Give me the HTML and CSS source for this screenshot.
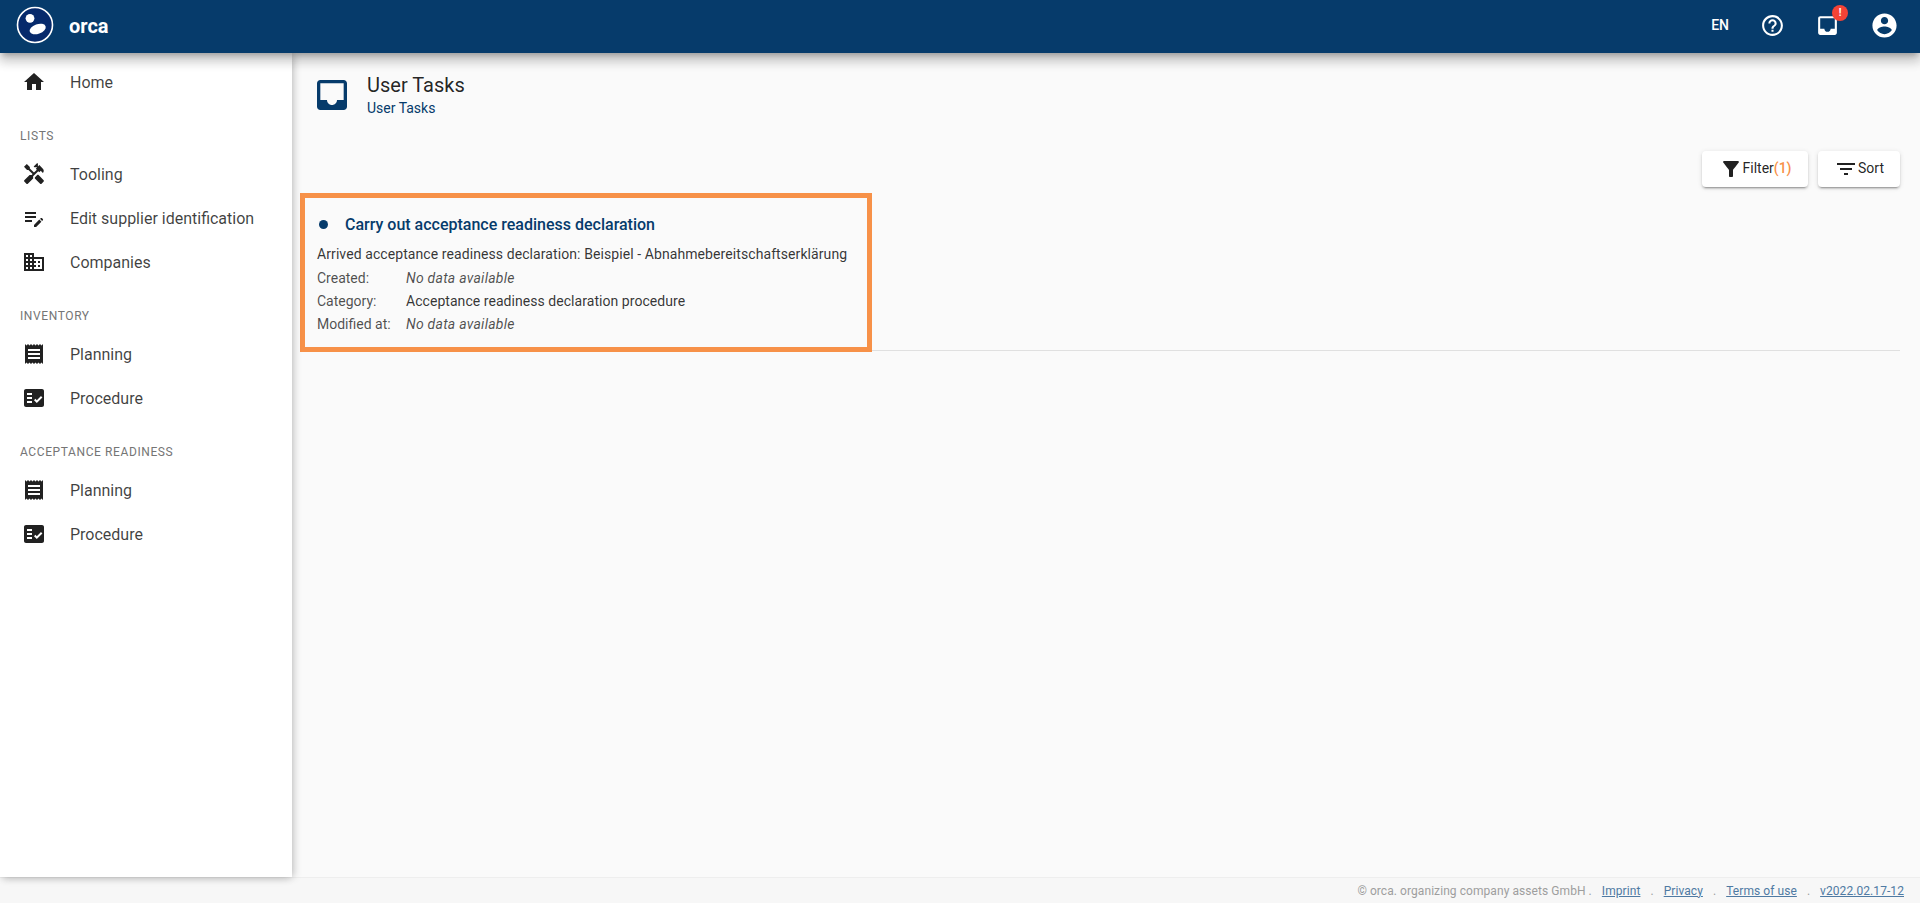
FILE: index.html
```html
<!DOCTYPE html>
<html lang="en">
<head>
<meta charset="utf-8">
<title>orca - User Tasks</title>
<link rel="stylesheet" href="styles.css">
</head>
<body>
<header class="topbar">
  <div class="brand">
    <svg class="logo" viewBox="0 0 38 38" width="38" height="38"><circle cx="19" cy="19" r="17.5" fill="#06296b" stroke="#fff" stroke-width="1.6"/><circle cx="14" cy="12.3" r="4.4" fill="#fff"/><ellipse cx="21.7" cy="23" rx="8.4" ry="4.8" transform="rotate(-20 21.7 23)" fill="#fff"/></svg>
    <span class="brand-name">orca</span>
  </div>
  <div class="top-actions">
    <span class="lang">EN</span>
    <svg class="ico-top" viewBox="0 0 24 24"><path d="M11 18h2v-2h-2v2zm1-16C6.48 2 2 6.48 2 12s4.48 10 10 10 10-4.48 10-10S17.52 2 12 2zm0 18c-4.41 0-8-3.59-8-8s3.59-8 8-8 8 3.59 8 8-3.59 8-8 8zm0-14c-2.21 0-4 1.79-4 4h2c0-1.1.9-2 2-2s2 .9 2 2c0 2-3 1.75-3 5h2c0-2.25 3-2.5 3-5 0-2.21-1.79-4-4-4z"/></svg>
    <span class="inbox-wrap">
      <svg class="ico-top" viewBox="0 0 24 24"><path d="M19 3H4.99c-1.11 0-1.98.89-1.98 2L3 19c0 1.1.88 2 1.99 2H19c1.1 0 2-.9 2-2V5c0-1.11-.9-2-2-2zm0 12h-4c0 1.66-1.35 3-3 3s-3-1.34-3-3H4.99V5H19v10z"/></svg>
      <span class="badge">!</span>
    </span>
    <svg class="ico-top ico-account" viewBox="0 0 24 24"><path d="M12 2C6.48 2 2 6.48 2 12s4.48 10 10 10 10-4.48 10-10S17.52 2 12 2zm0 3c1.66 0 3 1.34 3 3s-1.34 3-3 3-3-1.34-3-3 1.34-3 3-3zm0 14.2c-2.5 0-4.71-1.28-6-3.22.03-1.99 4-3.08 6-3.08 1.99 0 5.97 1.09 6 3.08-1.29 1.94-3.5 3.22-6 3.22z"/></svg>
  </div>
</header>
<div class="middle">
  <nav class="sidebar">
    <a class="item"><svg class="ico" viewBox="0 0 24 24"><path d="M10 20v-6h4v6h5v-8h3L12 3 2 12h3v8z"/></svg><span>Home</span></a>
    <div class="subhead">LISTS</div>
    <a class="item"><svg class="ico" viewBox="0 0 24 24"><path d="M21.67 18.17l-5.3-5.3h-.99l-2.54 2.54v.99l5.3 5.3c.39.39 1.02.39 1.41 0l2.12-2.12c.39-.38.39-1.02 0-1.41z"/><path d="M17.34 10.19l1.41-1.41 2.12 2.12c1.17-1.17 1.17-3.07 0-4.24l-3.54-3.54-1.41 1.41V1.71l-.7-.71-3.54 3.54.71.71h2.83l-1.41 1.41 1.06 1.06-2.89 2.89-4.13-4.13V5.06L4.83 2.04 2 4.87 5.03 7.9h1.41l4.13 4.13-.85.85H7.6l-5.3 5.3c-.39.39-.39 1.02 0 1.41l2.12 2.12c.39.39 1.02.39 1.41 0l5.3-5.3v-2.12l5.15-5.15 1.06 1.05z"/></svg><span>Tooling</span></a>
    <a class="item"><svg class="ico" viewBox="0 0 24 24"><path d="M3 10h11v2H3v-2zM3 8h11V6H3v2zM3 16h7v-2H3v2zM18.01 12.87l.7-.7c.39-.39 1.02-.39 1.41 0l.71.71c.39.39.39 1.02 0 1.41l-.7.7-2.12-2.12zM17.3 13.58l-5.3 5.3V21h2.12l5.3-5.3-2.12-2.12z"/></svg><span>Edit supplier identification</span></a>
    <a class="item"><svg class="ico" viewBox="0 0 24 24"><path d="M12 7V3H2v18h20V7H12zM6 19H4v-2h2v2zm0-4H4v-2h2v2zm0-4H4V9h2v2zm0-4H4V5h2v2zm4 12H8v-2h2v2zm0-4H8v-2h2v2zm0-4H8V9h2v2zm0-4H8V5h2v2zm10 12h-8v-2h2v-2h-2v-2h2v-2h-2V9h8v10zm-2-8h-2v2h2v-2zm0 4h-2v2h2v-2z"/></svg><span>Companies</span></a>
    <div class="subhead">INVENTORY</div>
    <a class="item"><svg class="ico" viewBox="0 0 24 24"><path d="M18 17H6v-2h12v2zm0-4H6v-2h12v2zm0-4H6V7h12v2zM3 22l1.5-1.5L6 22l1.5-1.5L9 22l1.5-1.5L12 22l1.5-1.5L15 22l1.5-1.5L18 22l1.5-1.5L21 22V2l-1.5 1.5L18 2l-1.5 1.5L15 2l-1.5 1.5L12 2l-1.5 1.5L9 2 7.5 3.5 6 2 4.5 3.5 3 2v20z"/></svg><span>Planning</span></a>
    <a class="item"><svg class="ico" viewBox="0 0 24 24"><path fill-rule="evenodd" d="M20 3H4c-1.1 0-2 .9-2 2v14c0 1.1.9 2 2 2h16c1.1 0 2-.9 2-2V5c0-1.1-.9-2-2-2zM10 17H5v-2h5v2zm0-4H5v-2h5v2zm0-4H5V7h5v2zm4.82 8L12 14.16l1.41-1.41 1.41 1.42L18.99 10l1.42 1.42L14.82 17z"/></svg><span>Procedure</span></a>
    <div class="subhead">ACCEPTANCE READINESS</div>
    <a class="item"><svg class="ico" viewBox="0 0 24 24"><path d="M18 17H6v-2h12v2zm0-4H6v-2h12v2zm0-4H6V7h12v2zM3 22l1.5-1.5L6 22l1.5-1.5L9 22l1.5-1.5L12 22l1.5-1.5L15 22l1.5-1.5L18 22l1.5-1.5L21 22V2l-1.5 1.5L18 2l-1.5 1.5L15 2l-1.5 1.5L12 2l-1.5 1.5L9 2 7.5 3.5 6 2 4.5 3.5 3 2v20z"/></svg><span>Planning</span></a>
    <a class="item"><svg class="ico" viewBox="0 0 24 24"><path fill-rule="evenodd" d="M20 3H4c-1.1 0-2 .9-2 2v14c0 1.1.9 2 2 2h16c1.1 0 2-.9 2-2V5c0-1.1-.9-2-2-2zM10 17H5v-2h5v2zm0-4H5v-2h5v2zm0-4H5V7h5v2zm4.82 8L12 14.16l1.41-1.41 1.41 1.42L18.99 10l1.42 1.42L14.82 17z"/></svg><span>Procedure</span></a>
  </nav>
  <main class="content">
    <div class="page-head">
      <svg class="page-ico" viewBox="0 0 24 24"><path d="M19 3H4.99c-1.11 0-1.98.89-1.98 2L3 19c0 1.1.88 2 1.99 2H19c1.1 0 2-.9 2-2V5c0-1.11-.9-2-2-2zm0 12h-4c0 1.66-1.35 3-3 3s-3-1.34-3-3H4.99V5H19v10z"/></svg>
      <div class="page-titles">
        <div class="page-title">User Tasks</div>
        <div class="page-sub">User Tasks</div>
      </div>
    </div>
    <div class="toolbar">
      <button class="btn btn-filter"><svg class="btn-ico" viewBox="0 0 24 24"><path d="M4.25 5.61C6.27 8.2 10 13 10 13v6c0 .55.45 1 1 1h2c.55 0 1-.45 1-1v-6s3.72-4.8 5.74-7.39c.51-.66.04-1.61-.79-1.61H5.04c-.83 0-1.3.95-.79 1.61z"/></svg><span class="btn-label">Filter<span class="count">(1)</span></span></button>
      <button class="btn btn-sort"><svg class="btn-ico" viewBox="0 0 24 24"><path d="M10 18h4v-2h-4v2zM3 6v2h18V6H3zm3 7h12v-2H6v2z"/></svg><span class="btn-label">Sort</span></button>
    </div>
    <div class="task-list">
      <article class="task">
        <div class="task-head"><span class="dot"></span><span class="task-title">Carry out acceptance readiness declaration</span></div>
        <div class="task-desc">Arrived acceptance readiness declaration: Beispiel - Abnahmebereitschaftserklärung</div>
        <div class="meta"><span class="meta-label">Created:</span><em class="meta-none">No data available</em></div>
        <div class="meta"><span class="meta-label">Category:</span><span class="meta-value">Acceptance readiness declaration procedure</span></div>
        <div class="meta"><span class="meta-label">Modified at:</span><em class="meta-none">No data available</em></div>
      </article>
    </div>
  </main>
</div>
<footer class="footer">
  <span>© orca. organizing company assets GmbH .</span>
  <a class="flink">Imprint</a><span>.</span>
  <a class="flink">Privacy</a><span>.</span>
  <a class="flink">Terms of use</a><span>.</span>
  <a class="flink">v2022.02.17-12</a>
</footer>
</body>
</html>
```
FILE: styles.css
```css
* { box-sizing: border-box; }
html, body { margin: 0; height: 100%; }
body {
  display: flex;
  flex-direction: column;
  height: 903px;
  overflow: hidden;
  background: #fafafa;
  font-family: Roboto, "Liberation Sans", sans-serif;
  color: rgba(0, 0, 0, .87);
}
.topbar {
  flex: 0 0 53px;
  display: flex;
  align-items: center;
  justify-content: space-between;
  padding-bottom: 3px;
  background: #063b6b;
  color: #fff;
  position: relative;
  z-index: 3;
  box-shadow: 0 5px 5px -3px rgba(0, 0, 0, .2), 0 8px 10px 1px rgba(0, 0, 0, .14), 0 3px 14px 2px rgba(0, 0, 0, .12);
}
.brand { display: flex; align-items: center; padding-left: 16px; }
.logo { display: block; }
.brand-name { margin-left: 15px; padding-top: 2px; font-size: 20px; font-weight: 700; }
.top-actions { display: flex; align-items: center; gap: 30px; padding-right: 21px; }
.lang { font-size: 14px; font-weight: 500; margin-right: 1px; }
.ico-top { width: 25px; height: 25px; fill: #fff; display: block; }
.ico-account { width: 29px; height: 29px; }
.inbox-wrap { position: relative; display: block; }
.badge {
  position: absolute;
  top: -8px;
  right: -8px;
  width: 16px;
  height: 16px;
  border-radius: 50%;
  background: #f44336;
  color: #fff;
  font-size: 10px;
  font-weight: 700;
  line-height: 16px;
  text-align: center;
}
.middle { flex: 1; display: flex; min-height: 0; }
.sidebar {
  flex: 0 0 292px;
  background: #fff;
  padding-top: 7px;
  position: relative;
  z-index: 2;
  box-shadow: 0 5px 8px -3px rgba(0, 0, 0, .12), 2px 0 8px 0 rgba(0, 0, 0, .2);
}
.item {
  display: flex;
  align-items: center;
  height: 44px;
  padding-left: 22px;
  font-size: 16px;
  color: rgba(0, 0, 0, .75);
}
.ico { width: 24px; height: 24px; margin-right: 24px; fill: #212121; flex: none; }
.subhead {
  height: 48px;
  padding: 24px 0 0 20px;
  font-size: 12px;
  line-height: 16px;
  letter-spacing: .6px;
  color: #757575;
}
.content { flex: 1; padding: 22px 20px 0 8px; min-width: 0; }
.page-head { display: flex; height: 76px; padding-left: 12px; }
.page-ico { width: 40px; height: 40px; fill: #063b6b; display: block; }
.page-titles { margin-left: 15px; }
.page-title { font-size: 20px; line-height: 20px; }
.page-sub { font-size: 14px; line-height: 20px; margin-top: 3px; color: #063b6b; }
.toolbar { display: flex; justify-content: flex-end; gap: 10px; height: 42px; }
.btn {
  height: 36px;
  display: flex;
  align-items: center;
  justify-content: center;
  border: 0;
  border-radius: 4px;
  background: #fff;
  font: 400 14px Roboto, "Liberation Sans", sans-serif;
  color: rgba(0, 0, 0, .87);
  box-shadow: 0 3px 1px -2px rgba(0, 0, 0, .2), 0 2px 2px 0 rgba(0, 0, 0, .14), 0 1px 5px 0 rgba(0, 0, 0, .12);
  padding: 0;
}
.btn-filter { width: 106px; }
.btn-sort { width: 82px; }
.btn-ico { width: 24px; height: 24px; fill: #212121; display: block; }
.btn-label { margin-bottom: 2px; }
.count { color: #f79148; font-weight: 500; }
.task-list { height: 158px; border-bottom: 1px solid #e0e0e0; }
.task {
  width: 572px;
  height: 159px;
  border: 5px solid #f79148;
  padding: 12px 12px 0;
  position: relative;
  color: rgba(0, 0, 0, .8);
}
.task-head { display: flex; align-items: center; height: 28px; }
.dot { width: 9px; height: 9px; border-radius: 50%; background: #063b6b; margin: 0 17px 0 2px; }
.task-title { font-size: 16px; font-weight: 500; color: #063b6b; }
.task-desc { font-size: 14px; line-height: 23px; margin: 5px 0 1px; letter-spacing: .085px; }
.meta { display: flex; font-size: 14px; line-height: 23px; }
.meta-label { flex: 0 0 89px; color: rgba(0, 0, 0, .7); }
.meta-value { letter-spacing: .05px; }
.meta-none { color: rgba(0, 0, 0, .7); letter-spacing: .25px; }
.footer {
  flex: 0 0 26px;
  display: flex;
  align-items: center;
  justify-content: flex-end;
  gap: 10px;
  padding-right: 16px;
  font-size: 12px;
  letter-spacing: .07px;
  color: #9e9e9e;
  background: #f7f7f7;
  border-top: 1px solid #eee;
}
.flink { color: #4f7aa3; text-decoration: underline; }
```
